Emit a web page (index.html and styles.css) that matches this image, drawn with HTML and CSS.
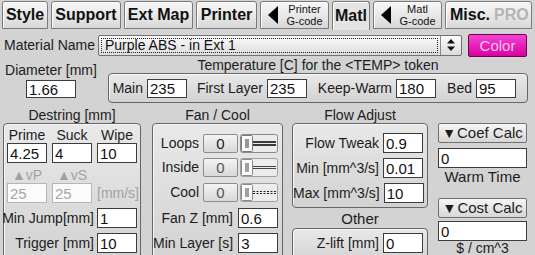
FILE: index.html
```html
<!DOCTYPE html>
<html lang="en">
<head>
    <meta charset="UTF-8">
    <title>Matl</title>
    <link rel="stylesheet" href="styles.css">
</head>
<body>
    <div class="tabs">
        <div class="tab w-style">Style</div>
        <div class="tab w-support">Support</div>
        <div class="tab w-extmap">Ext Map</div>
        <div class="tab w-printer">Printer</div>
        <div class="tab tab-gcode w-gcode">
            <svg class="back" width="11" height="18" viewBox="0 0 11 18"><polygon points="10,0 10,18 0,9" fill="#000"/></svg>
            <span class="small">Printer<br>G-code</span>
        </div>
        <div class="tab active w-matl">Matl</div>
        <div class="tab tab-gcode w-gcode">
            <svg class="back" width="11" height="18" viewBox="0 0 11 18"><polygon points="10,0 10,18 0,9" fill="#000"/></svg>
            <span class="small">Matl<br>G-code</span>
        </div>
        <div class="tab w-misc">Misc.<span class="pro">PRO</span></div>
    </div>

    <div class="matrow">
        <span class="matlabel">Material Name</span>
        <div class="select">
            <span class="selval">Purple ABS - in Ext 1</span>
            <span class="spin">
                <svg width="8" height="12" viewBox="0 0 8 12"><polygon points="4,0 8,4.5 0,4.5" fill="#111"/><polygon points="0,7.5 8,7.5 4,12" fill="#111"/></svg>
            </span>
        </div>
        <div class="colorbtn">Color</div>
    </div>

    <div class="row2">
        <div class="diam">
            <div class="lbl">Diameter [mm]</div>
            <input class="fld w50" value="1.66">
        </div>
        <div class="temp">
            <div class="hdr">Temperature [C] for the &lt;TEMP&gt; token</div>
            <div class="group temprow">
                <div class="tcell c1">Main<input class="fld" value="235"></div>
                <div class="tcell c2">First Layer<input class="fld" value="235"></div>
                <div class="tcell c3">Keep-Warm<input class="fld" value="180"></div>
                <div class="tcell c4">Bed<input class="fld" value="95"></div>
            </div>
        </div>
    </div>

    <div class="sections">
        <div class="col c-destring">
            <div class="hdr">Destring [mm]</div>
            <div class="group destring">
                <div class="dl">Prime</div>
                <div class="dl">Suck</div>
                <div class="dl">Wipe</div>
                <input class="fld" value="4.25">
                <input class="fld" value="4">
                <input class="fld" value="10">
                <div class="dl off">&#9650;vP</div>
                <div class="dl off">&#9650;vS</div>
                <div></div>
                <input class="fld dis" value="25">
                <input class="fld dis" value="25">
                <div class="dl off unit">[mm/s]</div>
                <div class="span2">Min Jump[mm]</div>
                <input class="fld" value="1">
                <div class="span2">Trigger [mm]</div>
                <input class="fld" value="10">
            </div>
        </div>

        <div class="col c-fan">
            <div class="hdr">Fan / Cool</div>
            <div class="group fan">
                <div class="frow">
                    <span class="flbl">Loops</span>
                    <span class="zbtn">0</span>
                    <svg class="slider" width="38" height="19" viewBox="0 0 38 19">
                        <rect x="0.5" y="0.5" width="37" height="18" rx="2" fill="#ececec" stroke="#8a8a8a"/>
                        <rect x="1.5" y="1.5" width="11" height="16" rx="1" fill="#fafafa" stroke="#7a7a7a"/>
                        <line x1="6" y1="5" x2="6" y2="14" stroke="#333"/>
                        <line x1="8" y1="5" x2="8" y2="14" stroke="#333"/>
                        <line x1="13" y1="8" x2="36" y2="8" stroke="#111" stroke-width="1.6"/>
                        <line x1="13" y1="11" x2="36" y2="11" stroke="#111" stroke-width="1.6"/>
                    </svg>
                </div>
                <div class="frow r2">
                    <span class="flbl">Inside</span>
                    <span class="zbtn off">0</span>
                    <svg class="slider" width="38" height="19" viewBox="0 0 38 19">
                        <rect x="0.5" y="0.5" width="37" height="18" rx="2" fill="#ececec" stroke="#a0a0a0"/>
                        <rect x="1.5" y="1.5" width="11" height="16" rx="1" fill="#fafafa" stroke="#8a8a8a"/>
                        <line x1="6" y1="5" x2="6" y2="14" stroke="#444"/>
                        <line x1="8" y1="5" x2="8" y2="14" stroke="#444"/>
                        <line x1="13" y1="8.5" x2="36" y2="8.5" stroke="#444"/>
                        <line x1="13" y1="10.5" x2="36" y2="10.5" stroke="#444"/>
                    </svg>
                </div>
                <div class="frow r3">
                    <span class="flbl">Cool</span>
                    <span class="zbtn off">0</span>
                    <svg class="slider" width="38" height="19" viewBox="0 0 38 19">
                        <rect x="0.5" y="0.5" width="37" height="18" rx="2" fill="#ececec" stroke="#a0a0a0"/>
                        <rect x="1.5" y="1.5" width="11" height="16" rx="1" fill="#fafafa" stroke="#8a8a8a"/>
                        <line x1="6" y1="5" x2="6" y2="14" stroke="#444"/>
                        <line x1="8" y1="5" x2="8" y2="14" stroke="#444"/>
                        <line x1="13" y1="8.5" x2="36" y2="8.5" stroke="#222" stroke-dasharray="2 1.5"/>
                        <line x1="13" y1="10.5" x2="36" y2="10.5" stroke="#222" stroke-dasharray="2 1.5"/>
                    </svg>
                </div>
                <div class="frow r4">
                    <span class="flbl">Fan Z [mm]</span>
                    <input class="fld" value="0.6">
                </div>
                <div class="frow r5">
                    <span class="flbl">Min Layer [s]</span>
                    <input class="fld" value="3">
                </div>
            </div>
        </div>

        <div class="col c-flow">
            <div class="hdr">Flow Adjust</div>
            <div class="group flow">
                <div class="frow">
                    <span class="flbl">Flow Tweak</span>
                    <input class="fld" value="0.9">
                </div>
                <div class="frow r-next">
                    <span class="flbl">Min [mm^3/s]</span>
                    <input class="fld" value="0.01">
                </div>
                <div class="frow r-next">
                    <span class="flbl">Max [mm^3/s]</span>
                    <input class="fld" value="10">
                </div>
            </div>
            <div class="hdr other">Other</div>
            <div class="group zlift">
                <div class="frow">
                    <span class="flbl">Z-lift [mm]</span>
                    <input class="fld" value="0">
                </div>
            </div>
        </div>

        <div class="col c-right">
            <div class="calcbtn"><span class="tri">&#9660;</span>Coef Calc</div>
            <input class="fld wide" value="0">
            <div class="note">Warm Time</div>
            <div class="calcbtn cost"><span class="tri">&#9660;</span>Cost Calc</div>
            <input class="fld wide" value="0">
            <div class="note last">$ / cm^3</div>
        </div>
    </div>
</body>
</html>
```

FILE: styles.css
```css
html, body { margin: 0; padding: 0; }
body {
    width: 535px;
    height: 255px;
    overflow: hidden;
    background: #d3d3d3;
    font-family: "Liberation Sans", Arial, sans-serif;
    font-size: 14px;
    color: #1c1c1c;
}

/* tabs */
.tabs {
    display: flex;
    gap: 3px;
    height: 30px;
    padding: 1px 0 0 2px;
    box-sizing: border-box;
}
.tab {
    height: 28px;
    box-sizing: border-box;
    border: 1px solid #7a7a7a;
    border-radius: 3px 3px 0 0;
    background: linear-gradient(#f8f8f8, #d8d8d8);
    box-shadow: inset 1px 1px 0 #fff;
    font-size: 16px;
    font-weight: bold;
    color: #111;
    display: flex;
    align-items: center;
    justify-content: center;
}
.tab.active {
    height: 29px;
    border-bottom: none;
    background: #e4e4e4;
}
.w-style { width: 46px; }
.w-support { width: 70px; }
.w-extmap { width: 69px; }
.w-printer { width: 61px; }
.w-gcode { width: 69px; }
.w-matl { width: 38px; }
.w-misc { width: 87px; justify-content: flex-start; padding-left: 4px; }
.pro { color: #b4b4b4; margin-left: 4px; }
.tab-gcode { justify-content: flex-start; padding-left: 7px; }
.back { flex: none; }
.small {
    flex: 1;
    font-size: 11px;
    font-weight: normal;
    line-height: 12px;
    text-align: center;
    margin-left: 2px;
}

/* material row */
.matrow {
    display: flex;
    align-items: center;
    height: 24px;
    margin-top: 3px;
    padding-left: 4px;
}
.matlabel { width: 94px; }
.select {
    width: 364px;
    height: 21px;
    box-sizing: border-box;
    border: 1px solid #707070;
    border-radius: 2px;
    background: linear-gradient(#fbfbfb, #dcdcdc);
    display: flex;
}
.selval {
    flex: 1;
    margin: 2px;
    border: 1px dotted #222;
    padding-left: 3px;
    line-height: 13px;
    font-size: 14px;
    color: #111;
}
.spin {
    width: 20px;
    border-left: 1px solid #8a8a8a;
    display: flex;
    align-items: center;
    justify-content: center;
}
.colorbtn {
    width: 59px;
    height: 23px;
    margin-left: 6px;
    box-sizing: border-box;
    border: 1px solid #70004f;
    border-radius: 2px;
    background: linear-gradient(#f445d2, #d8009f);
    color: #ffc6f0;
    font-size: 15px;
    line-height: 21px;
    text-align: center;
}

/* diameter + temperature */
.row2 { display: flex; padding-left: 2px; }
.diam { width: 98px; padding-top: 5px; text-align: center; }
.lbl { line-height: 16px; }
.diam .fld { margin-top: 2px; height: 18px; }
.temp { width: 420px; margin-left: 8px; }
.hdr { height: 16px; line-height: 16px; text-align: center; }

.group {
    box-sizing: border-box;
    border: 1px solid #666;
    border-radius: 4px;
    background: linear-gradient(#e9e9e9, #d2d2d2);
    box-shadow: inset 1px 1px 0 #f6f6f6;
}
.temprow {
    height: 30px;
    display: flex;
    align-items: center;
}
.tcell {
    display: flex;
    align-items: center;
    justify-content: flex-end;
}
.tcell .fld { margin-left: 4px; height: 19px; }
.c1 { width: 78px; }
.c2 { width: 120px; }
.c3 { width: 129px; }
.c4 { width: 80px; }

.fld {
    box-sizing: border-box;
    width: 40px;
    height: 20px;
    margin: 0;
    padding: 0 2px;
    border: 1px solid #3c3c3c;
    border-radius: 0;
    background: #fff;
    font-family: "Liberation Sans", Arial, sans-serif;
    font-size: 15px;
    color: #111;
    outline: none;
}
.fld.w50 { width: 50px; }
.fld.dis { border-color: #b6b6b6; color: #a6a6a6; background: #fbfbfb; }

/* lower sections */
.sections { display: flex; margin-top: 4px; padding-left: 3px; }
.c-destring { width: 138px; }
.c-fan { width: 131px; margin-left: 11px; }
.c-flow { width: 136px; margin-left: 9px; }
.c-right { width: 89px; margin-left: 10px; padding-top: 16px; }

.destring {
    height: 140px;
    display: grid;
    grid-template-columns: 40px 40px 40px;
    grid-template-rows: 16px 24px 16px 25px 25px 20px;
    column-gap: 5px;
    padding: 3px 0 0 3px;
    align-items: start;
}
.dl { text-align: center; line-height: 16px; white-space: nowrap; }
.dl.off { color: #a2a2a2; }
.dl.unit { line-height: 20px; }
.span2 {
    grid-column: span 2;
    display: flex;
    justify-content: flex-end;
    white-space: nowrap;
    line-height: 20px;
    margin-right: -2px;
}

.fan { height: 140px; padding: 9px 4px 0 0; }
.frow { display: flex; align-items: center; height: 20px; }
.flbl { flex: 1; text-align: right; padding-right: 4px; white-space: nowrap; }
.fan .r2 { margin-top: 4px; }
.fan .r3 { margin-top: 5px; }
.fan .r4 { margin-top: 6px; }
.fan .r5 { margin-top: 5px; }
.fan .r4 .flbl, .fan .r5 .flbl { padding-right: 5px; }
.zbtn {
    width: 35px;
    height: 19px;
    box-sizing: border-box;
    border: 1px solid #8c8c8c;
    border-radius: 2px;
    background: linear-gradient(#f4f4f4, #d8d8d8);
    text-align: center;
    line-height: 17px;
    font-size: 15px;
}
.zbtn.off { color: #555; }
.slider { margin-left: 2px; flex: none; }

.flow { height: 85px; padding: 9px 4px 0 0; }
.flow .r-next { margin-top: 5px; }
.other { height: 20px; line-height: 22px; font-size: 15px; }
.zlift { height: 35px; padding: 4px 4px 0 0; }

.calcbtn {
    height: 20px;
    box-sizing: border-box;
    border: 1px solid #707070;
    border-radius: 2px;
    background: linear-gradient(#f6f6f6, #d6d6d6);
    font-size: 15px;
    line-height: 18px;
    text-align: center;
}
.tri { font-size: 14px; margin-right: 1px; }
.calcbtn.cost { margin-top: 12px; }
.fld.wide { width: 89px; margin-top: 5px; }
.calcbtn.cost + .fld.wide { margin-top: 3px; }
.note { text-align: center; line-height: 18px; font-size: 15px; }
.note.last { line-height: 12px; font-size: 14px; padding-top: 1px; }
```
